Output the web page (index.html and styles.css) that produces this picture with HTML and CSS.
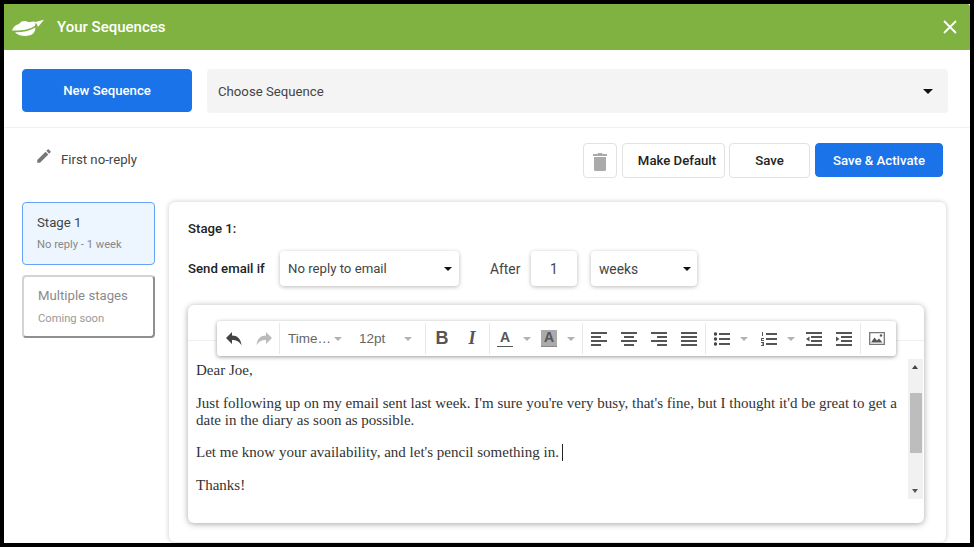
FILE: index.html
```html
<!DOCTYPE html>
<html lang="en">
<head>
<meta charset="utf-8">
<title>Your Sequences</title>
<link rel="stylesheet" href="styles.css">
</head>
<body>
<div class="app">
  <header class="header">
    <svg class="logo" viewBox="0 0 32 18" width="32" height="18"><path fill="#fff" d="M0 11.500C1.500 7.500 4 5.500 7 5c1.500-2.500 4-3.500 6.500-3 1.500.4 2.500 1.200 4 1 2-.4 3.500-.8 5-.5 1.200 1.500 1 3 .3 4.500-5 3.500-14 5-22.800 4.500z"/><path fill="#fff" d="M3 13.300c7 .2 14-1.200 20.300-4.800.2 3-1 5.500-3.500 7-4.500 2-11 2-14-.2C4.500 14.800 3.700 14.200 3 13.300z"/><path fill="#fff" d="M21.500 3.500L32 .8l-6 7.200-1.300-3.300z"/></svg>
    <h1 class="title">Your Sequences</h1>
    <svg class="close" viewBox="0 0 14 14" width="14" height="14"><path d="M1 1l12 12M13 1L1 13" stroke="#fff" stroke-width="1.800" fill="none"/></svg>
  </header>
  <div class="top-row">
    <button class="btn-primary new-seq">New Sequence</button>
    <div class="choose"><span>Choose Sequence</span><i class="arrow arrow-lg"></i></div>
  </div>
  <div class="action-row">
    <div class="rename">
      <svg viewBox="0 0 24 24" width="18" height="18"><path fill="#777" d="M3 17.250V21h3.750L17.810 9.940l-3.750-3.750L3 17.250zM20.710 7.040a1 1 0 0 0 0-1.410l-2.340-2.340a1 1 0 0 0-1.410 0l-1.830 1.830 3.750 3.750 1.830-1.830z"/></svg>
      <span>First no-reply</span>
    </div>
    <div class="actions">
      <button class="btn-outline trash"><svg viewBox="0 0 14 19" width="14" height="19"><path fill="#aaa" d="M0 2h4.500l.5-1h4l.5 1H14v2H0zM1 5h12v12.500a1.500 1.500 0 0 1-1.500 1.500h-9A1.500 1.500 0 0 1 1 17.500z"/></svg></button>
      <button class="btn-outline make-default">Make Default</button>
      <button class="btn-outline save">Save</button>
      <button class="btn-primary activate">Save &amp; Activate</button>
    </div>
  </div>
  <main class="main">
    <aside class="sidebar">
      <div class="stage active"><div class="stage-name">Stage 1</div><div class="stage-sub">No reply - 1 week</div></div>
      <div class="stage disabled"><div class="stage-name">Multiple stages</div><div class="stage-sub">Coming soon</div></div>
    </aside>
    <section class="panel">
      <div class="panel-title">Stage 1:</div>
      <div class="rule-row">
        <span class="rule-label">Send email if</span>
        <div class="field reply"><span>No reply to email</span><i class="arrow"></i></div>
        <span class="after">After</span>
        <div class="field count">1</div>
        <div class="field unit"><span>weeks</span><i class="arrow"></i></div>
      </div>
      <div class="editor">
        <div class="editor-head"></div>
        <div class="toolbar">
          <div class="group g-history">
            <span class="tool"><svg viewBox="0 0 16 14" width="16" height="14"><path fill="#444" d="M6 0v3.500c5 0 9 3 9.500 10C13.500 9.500 10.500 8 6 8v4L0 6z"/></svg></span>
            <span class="tool"><svg viewBox="0 0 16 14" width="16" height="14"><path fill="#bbb" d="M10 0v3.500c-5 0-9 3-9.500 10C2.500 9.500 5.500 8 10 8v4l6-6z"/></svg></span>
          </div>
          <div class="group g-font">
            <span class="font-name">Time…</span><i class="caret"></i>
            <span class="font-size">12pt</span><i class="caret"></i>
          </div>
          <div class="group g-style">
            <span class="tool glyph bold">B</span>
            <span class="tool glyph italic">I</span>
          </div>
          <div class="group g-color">
            <span class="tool"><span class="color-a">A</span></span><span class="caret-cell"><i class="caret"></i></span>
            <span class="tool"><span class="color-a filled">A</span></span><span class="caret-cell"><i class="caret"></i></span>
          </div>
          <div class="group g-align">
            <span class="tool"><svg viewBox="0 0 16 14" width="16" height="14"><path fill="#555" d="M0 0h16v2H0zM0 4h10v2H0zM0 8h16v2H0zM0 12h10v2H0z"/></svg></span>
            <span class="tool"><svg viewBox="0 0 16 14" width="16" height="14"><path fill="#555" d="M0 0h16v2H0zM3 4h10v2H3zM0 8h16v2H0zM3 12h10v2H3z"/></svg></span>
            <span class="tool"><svg viewBox="0 0 16 14" width="16" height="14"><path fill="#555" d="M0 0h16v2H0zM6 4h10v2H6zM0 8h16v2H0zM6 12h10v2H6z"/></svg></span>
            <span class="tool"><svg viewBox="0 0 16 14" width="16" height="14"><path fill="#555" d="M0 0h16v2H0zM0 4h16v2H0zM0 8h16v2H0zM0 12h16v2H0z"/></svg></span>
          </div>
          <div class="group g-list">
            <span class="tool"><svg viewBox="0 0 16 14" width="16" height="14"><path fill="#555" d="M5 1h11v2H5zM5 6h11v2H5zM5 11h11v2H5z"/><circle fill="#444" cx="1.500" cy="2" r="1.700"/><circle fill="#444" cx="1.500" cy="7" r="1.700"/><circle fill="#444" cx="1.500" cy="12" r="1.700"/></svg></span><span class="caret-cell list-caret"><i class="caret"></i></span>
            <span class="tool"><svg viewBox="0 0 16 14" width="16" height="14"><path fill="#555" d="M5 1h11v2H5zM5 6h11v2H5zM5 11h11v2H5zM1 0h1v4H1zM0 6h3v1H1v1h2v1H0zM0 10h3v4H0v-1h2v-.500H1v-1h1V11H0z"/></svg></span><span class="caret-cell num-caret"><i class="caret"></i></span>
            <span class="tool"><svg viewBox="0 0 16 14" width="16" height="14"><path fill="#555" d="M0 0h16v2H0zM5 4h11v2H5zM5 8h11v2H5zM0 12h16v2H0zM3.500 4.500v5L0 7z"/></svg></span>
            <span class="tool"><svg viewBox="0 0 16 14" width="16" height="14"><path fill="#555" d="M0 0h16v2H0zM5 4h11v2H5zM5 8h11v2H5zM0 12h16v2H0zM0 4.500v5L3.500 7z"/></svg></span>
          </div>
          <div class="group g-media">
            <span class="tool"><svg viewBox="0 0 16 13" width="16" height="13"><path fill="none" stroke="#777" stroke-width="1.300" d="M.700.700h14.600v11.600H.700z"/><path fill="#555" d="M2 10.500l3.500-5 2.500 3 2-2 3.500 4z"/><circle fill="#555" cx="12" cy="3.500" r="1.200"/></svg></span>
          </div>
        </div>
        <div class="editor-body">
          <div class="content">
            <p>Dear Joe,</p>
            <p>Just following up on my email sent last week. I'm sure you're very busy, that's fine, but I thought it'd be great to get a date in the diary as soon as possible.</p>
            <p>Let me know your availability, and let's pencil something in.<span class="text-caret"></span></p>
            <p>Thanks!</p>
          </div>
          <div class="scrollbar">
            <i class="sb-up"></i>
            <div class="sb-thumb"></div>
            <i class="sb-down"></i>
          </div>
        </div>
      </div>
    </section>
  </main>
</div>
</body>
</html>
```
FILE: styles.css
```css
* { box-sizing: border-box; }
html, body { margin: 0; height: 100%; }
body {
  background: #000;
  padding: 4px;
  overflow: hidden;
  font-family: Roboto, "Liberation Sans", sans-serif;
  font-size: 13.200px;
  color: #333;
}
button { font-family: inherit; cursor: pointer; }
.app {
  width: 966px;
  height: 539px;
  background: #fff;
  overflow: hidden;
}
.header {
  height: 46px;
  background: #7fb241;
  display: flex;
  align-items: center;
  padding: 0 13px 0 8px;
  border-top-right-radius: 3px;
}
.logo { flex: none; margin-top: 2px; }
.title {
  margin: 0 0 0 13px;
  flex: 1;
  font-size: 15px;
  font-weight: 500;
  color: #fff;
}
.close { flex: none; }
.top-row {
  height: 78px;
  padding: 19px 22px 0 18px;
  display: flex;
  gap: 15px;
  border-bottom: 1px solid #f2f2f2;
}
.btn-primary {
  background: #1a73e8;
  border: 1px solid #1a73e8;
  color: #fff;
  font-size: 13.200px;
  font-weight: 500;
  border-radius: 4px;
}
.new-seq { width: 170px; height: 43px; }
.choose {
  flex: 1;
  height: 44px;
  background: #f4f4f4;
  border-radius: 4px;
  display: flex;
  align-items: center;
  justify-content: space-between;
  padding: 0 15px 0 11px;
  color: #444;
}
.arrow {
  width: 0;
  height: 0;
  border-left: 4px solid transparent;
  border-right: 4px solid transparent;
  border-top: 4px solid #111;
}
.arrow-lg {
  border-left-width: 5px;
  border-right-width: 5px;
  border-top-width: 5px;
}
.action-row {
  height: 74px;
  padding: 15px 27px 0 32px;
  display: flex;
  justify-content: space-between;
  align-items: flex-start;
}
.rename {
  display: flex;
  align-items: center;
  gap: 8px;
  height: 32px;
  color: #444;
}
.rename svg { margin-top: -6px; margin-left: -1px; }
.actions { display: flex; gap: 4px; }
.btn-outline {
  height: 35px;
  background: #fff;
  border: 1px solid #e2e2e2;
  border-radius: 4px;
  color: #222;
  font-size: 13.200px;
  font-weight: 500;
  padding: 0;
}
.trash {
  width: 34px;
  margin-right: 1px;
  display: flex;
  align-items: center;
  justify-content: center;
  padding-top: 2px;
}
.make-default { width: 103px; padding-left: 7px; }
.save { width: 81px; margin-right: 1px; }
.activate { width: 128px; height: 34px; }
.main {
  display: flex;
  align-items: flex-start;
  gap: 14px;
  padding-left: 18px;
}
.sidebar {
  width: 133px;
  display: flex;
  flex-direction: column;
  gap: 10px;
}
.stage {
  height: 63px;
  border-radius: 4px;
  padding: 11px 14px;
}
.stage.active {
  background: #edf5ff;
  border: 1px solid #67a3f3;
}
.stage.disabled {
  border: 2px solid #d4d4d4;
  border-right-color: #8f8f8f;
  border-bottom-color: #8f8f8f;
  padding: 10px 14px;
}
.stage-name { font-size: 13.200px; line-height: 17px; color: #444; }
.stage-sub { font-size: 11.200px; line-height: 14px; margin-top: 7px; color: #888; }
.disabled .stage-name { color: #8a8a8a; }
.disabled .stage-sub { color: #999; margin-top: 8px; }
.panel {
  width: 777px;
  height: 340px;
  background: #fff;
  border-radius: 6px;
  box-shadow: 0 0 5px rgba(0, 0, 0, .22);
  padding: 17px 18px 0 18px;
}
.panel-title {
  height: 20px;
  line-height: 20px;
  padding-left: 1px;
  font-weight: 500;
  color: #222;
}
.rule-row {
  display: flex;
  align-items: center;
  height: 35px;
  margin-top: 12px;
}
.rule-label { width: 93px; padding-left: 1px; font-weight: 500; color: #222; }
.field {
  height: 35px;
  background: #fff;
  border-radius: 4px;
  box-shadow: 0 1px 4px rgba(0, 0, 0, .28);
  display: flex;
  align-items: center;
  justify-content: space-between;
  color: #444;
}
.reply { width: 179px; padding: 0 7px 0 8px; }
.after { margin-left: 31px; width: 41px; color: #444; font-size: 13.800px; }
.count { width: 46px; justify-content: center; font-size: 13.800px; }
.unit { width: 106px; margin-left: 14px; padding: 0 6px 0 8px; font-size: 13.800px; }
.editor {
  position: relative;
  width: 736px;
  height: 218px;
  margin-top: 19px;
  margin-left: 1px;
  background: #fff;
  border-radius: 6px;
  box-shadow: 0 1px 6px rgba(0, 0, 0, .35);
}
.editor-head {
  height: 36px;
  border-bottom: 1px solid #f0f0f0;
}
.toolbar {
  position: absolute;
  top: 16px;
  left: 29px;
  width: 679px;
  height: 35px;
  background: #fff;
  border-radius: 3px;
  box-shadow: 0 1px 4px rgba(0, 0, 0, .4);
  display: flex;
  padding: 2px 0;
}
.group {
  display: flex;
  align-items: center;
  height: 31px;
  border-right: 1px solid #e8e8e8;
}
.group:last-child { border-right: 0; }
.tool {
  flex: none;
  width: 30px;
  height: 31px;
  display: flex;
  align-items: center;
  justify-content: center;
}
.g-history { width: 63px; padding-left: 2px; }
.g-font {
  width: 146px;
  padding-left: 8px;
  color: #666;
  font-family: "Liberation Sans", sans-serif;
  font-size: 13.500px;
}
.font-name { width: 46px; }
.font-size { width: 47px; margin-left: 15px; padding-left: 2px; }
.g-style { width: 64px; padding-left: 1px; }
.g-color { width: 93px; }
.g-align { width: 123px; padding-left: 1px; }
.g-list { width: 155px; padding-left: 1px; }
.g-media { width: 35px; padding-left: 1px; }
.caret {
  display: block;
  width: 0;
  height: 0;
  border-left: 4px solid transparent;
  border-right: 4px solid transparent;
  border-top: 4px solid #a9b4bf;
}
.caret-cell {
  flex: none;
  width: 14px;
  display: flex;
  justify-content: center;
}
.list-caret { margin-right: 3px; }
.num-caret { margin-right: 1px; }
.glyph { font-family: "Liberation Sans", sans-serif; font-size: 18px; color: #555; }
.bold { font-weight: 700; }
.italic { font-style: italic; font-family: "Liberation Serif", serif; font-weight: 700; }
.color-a {
  display: block;
  width: 16px;
  height: 17px;
  line-height: 15px;
  text-align: center;
  font-family: "Liberation Sans", sans-serif;
  font-size: 14px;
  font-weight: 700;
  color: #555;
  border-bottom: 1.500px solid #555;
}
.color-a.filled { background: #aaa; border-bottom-color: #888; }
.editor-body {
  display: flex;
  height: 140px;
  margin-top: 18px;
  padding: 0 1px 0 8px;
}
.content {
  flex: 1;
  overflow: hidden;
  font-family: "Liberation Serif", serif;
  font-size: 15px;
  line-height: 17px;
  color: #333;
  padding-right: 10px;
}
.content p { margin: 3px 0 15.500px; }
.content p + p { margin-top: 0; }
.text-caret {
  display: inline-block;
  width: 1px;
  height: 17px;
  margin-left: 3px;
  vertical-align: -4px;
  background: #222;
}
.scrollbar {
  flex: none;
  width: 15px;
  height: 140px;
  background: #f1f1f1;
  padding: 34px 1px 0 2px;
  position: relative;
}
.sb-thumb { height: 60px; background: #bdbdbd; }
.sb-up, .sb-down {
  position: absolute;
  left: 4px;
  width: 0;
  height: 0;
  border-left: 3.500px solid transparent;
  border-right: 3.500px solid transparent;
}
.sb-up { top: 6px; border-bottom: 4px solid #444; }
.sb-down { bottom: 6px; border-top: 4px solid #555; }
```
